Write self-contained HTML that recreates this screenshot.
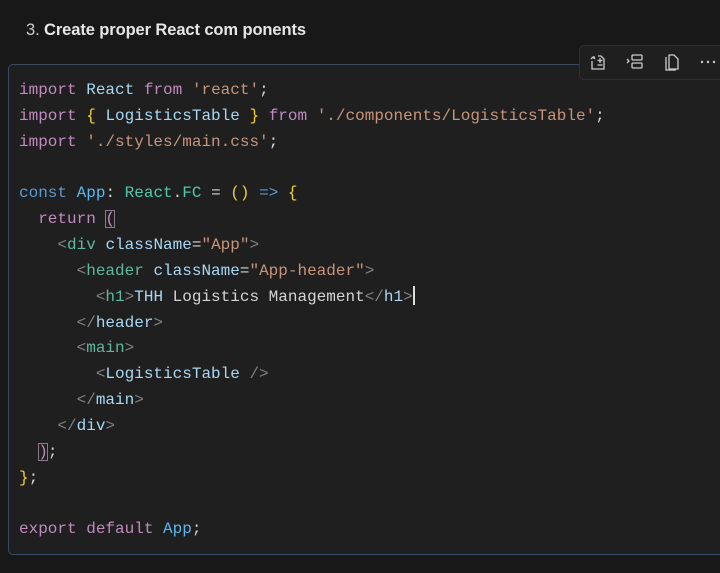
<!DOCTYPE html>
<html><head><meta charset="utf-8"><style>
html,body{margin:0;padding:0;background:#181818;width:720px;height:573px;overflow:hidden;position:relative}
.h{position:absolute;left:26px;top:21px;font:16.5px "Liberation Sans",sans-serif;color:#ccc;letter-spacing:-0.1px}
.h b{color:#e6e6e6}
.box{position:absolute;left:8px;top:64px;width:730px;height:489px;background:#1f1f1f;border:1px solid #3a4a66;border-radius:5px}
pre{position:absolute;left:19px;top:78px;margin:0;font:16px/25.85px "Liberation Mono",monospace;color:#d4d4d4}
.k{color:#c08ac0}.v{color:#a8d8f4}.s{color:#c8957a}.c{color:#5a9bd0}.t{color:#4ec9b0}.y{color:#f0d030}.g{color:#808080}.f{color:#56b8ee}.jt{color:#5fb9a0}
.br{outline:1px solid #8a7a8a;outline-offset:-1px}
.tb{position:absolute;left:579px;top:45px;width:150px;height:33px;background:#1f1f1f;border:1px solid #303030;border-radius:5px}
.tb svg{position:absolute;top:6px}
.cur{display:inline-block;width:2px;height:19px;background:#ddd;vertical-align:-4px}
</style></head><body>
<div class="h">3. <b>Create proper React com ponents</b></div>
<div class="box"></div>
<pre><span class="k">import</span> <span class="v">React</span> <span class="k">from</span> <span class="s">'react'</span>;
<span class="k">import</span> <span class="y">{</span> <span class="v">LogisticsTable</span> <span class="y">}</span> <span class="k">from</span> <span class="s">'./components/LogisticsTable'</span>;
<span class="k">import</span> <span class="s">'./styles/main.css'</span>;

<span class="c">const</span> <span class="f">App</span>: <span class="t">React</span>.<span class="t">FC</span> = <span class="y">()</span> <span class="c">=&gt;</span> <span class="y">{</span>
  <span class="k">return</span> <span class="k br">(</span>
    <span class="g">&lt;</span><span class="jt">div</span> <span class="v">className</span>=<span class="s">"App"</span><span class="g">&gt;</span>
      <span class="g">&lt;</span><span class="jt">header</span> <span class="v">className</span>=<span class="s">"App-header"</span><span class="g">&gt;</span>
        <span class="g">&lt;</span><span class="jt">h1</span><span class="g">&gt;</span><span class="v">THH</span> Logistics Management<span class="g">&lt;/</span><span class="v">h1</span><span class="g">&gt;</span><span class="cur"></span>
      <span class="g">&lt;/</span><span class="v">header</span><span class="g">&gt;</span>
      <span class="g">&lt;</span><span class="jt">main</span><span class="g">&gt;</span>
        <span class="g">&lt;</span><span class="v">LogisticsTable</span> <span class="g">/&gt;</span>
      <span class="g">&lt;/</span><span class="v">main</span><span class="g">&gt;</span>
    <span class="g">&lt;/</span><span class="v">div</span><span class="g">&gt;</span>
  <span class="k br">)</span>;
<span class="y">}</span>;

<span class="k">export</span> <span class="k">default</span> <span class="f">App</span>;</pre>
<div class="tb">
<svg style="left:8px" width="20" height="20" viewBox="0 0 20 20" fill="none" stroke="#ccc" stroke-width="1.3"><path d="M3 7l2-2h2M5 5l2 2M4 9v8h12V7l-3-3h-3"/><path d="M12 6v5M9.5 8.5h5M9.5 13h5"/></svg>
<svg style="left:45px" width="20" height="20" viewBox="0 0 20 20" fill="none" stroke="#ccc" stroke-width="1.3"><path d="M2 7l2 2-2 2"/><rect x="7" y="3" width="10" height="5" rx="1"/><rect x="7" y="11" width="10" height="5" rx="1"/></svg>
<svg style="left:82px" width="20" height="20" viewBox="0 0 20 20" fill="none" stroke="#ccc" stroke-width="1.3"><path d="M7 3h5l4 4v10H7z"/><path d="M4 5v13h10"/></svg>
<svg style="left:118px" width="20" height="20" viewBox="0 0 20 20" fill="#ccc"><circle cx="4" cy="10" r="1.2"/><circle cx="10" cy="10" r="1.2"/><circle cx="16" cy="10" r="1.2"/></svg>
</div>
</body></html>
